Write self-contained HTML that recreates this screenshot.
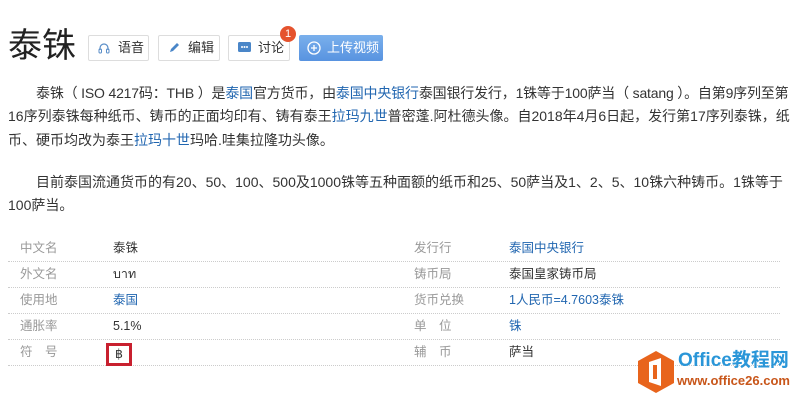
<!DOCTYPE html>
<html><head><meta charset="utf-8"><style>
body{margin:0;background:#fff;width:800px;height:400px;overflow:hidden;font-family:"Liberation Sans","Noto Sans CJK SC",sans-serif;color:#333}
.t{position:absolute;left:8px;top:24px;font-size:34px;color:#222;line-height:44px}
.btn{position:absolute;top:35px;height:26px;border:1px solid #ddd;border-radius:2px;font-size:13px;line-height:24px;color:#333;box-sizing:border-box;background:#fff}
.p{position:absolute;left:8px;font-size:14px;line-height:23.5px;white-space:nowrap}
a{color:#2166b0;text-decoration:none}
.r{position:absolute;left:8px;width:772px;height:26px;border-bottom:1px dotted #ccc;font-size:12.5px;line-height:26px}
.r span{position:absolute}
.l{color:#999}
</style></head><body>
<div class="t">泰铢</div>
<div class="btn" style="left:88px;width:61px"><svg style="position:absolute;left:9px;top:6px" width="12" height="12" viewBox="0 0 12 12"><path d="M2 8V6a4 4 0 0 1 8 0v2" fill="none" stroke="#5a8ec8" stroke-width="1.2"/><rect x="1" y="7" width="2.5" height="4" rx="1" fill="none" stroke="#5a8ec8"/><rect x="8.5" y="7" width="2.5" height="4" rx="1" fill="none" stroke="#5a8ec8"/></svg><span style="position:absolute;left:29px">语音</span></div>
<div class="btn" style="left:158px;width:62px"><svg style="position:absolute;left:9px;top:5px" width="13" height="13" viewBox="0 0 13 13"><path d="M2 11l1-3 6-6 2 2-6 6z" fill="#4a86c8"/></svg><span style="position:absolute;left:29px">编辑</span></div>
<div class="btn" style="left:228px;width:62px"><svg style="position:absolute;left:9px;top:6px" width="13" height="12" viewBox="0 0 13 12"><rect x="0" y="0" width="13" height="10" rx="1.5" fill="#4a86c8"/><circle cx="4" cy="5" r="1" fill="#fff"/><circle cx="6.5" cy="5" r="1" fill="#fff"/><circle cx="9" cy="5" r="1" fill="#fff"/></svg><span style="position:absolute;left:29px">讨论</span></div>
<div style="position:absolute;left:280px;top:26px;width:16px;height:16px;border-radius:50%;background:#e5532e;color:#fff;font-size:11px;line-height:16px;text-align:center">1</div>
<div class="btn" style="left:299px;width:84px;border:none;background:linear-gradient(#7ab0ec,#5893e0);color:#fff;line-height:26px"><svg style="position:absolute;left:8px;top:6px" width="14" height="14" viewBox="0 0 14 14"><circle cx="7" cy="7" r="6" fill="none" stroke="#fff" stroke-width="1.3"/><path d="M7 4v6M4 7h6" stroke="#fff" stroke-width="1.3"/></svg><span style="position:absolute;left:28px">上传视频</span></div>
<div class="p" style="top:82px;left:36px;letter-spacing:-0.18px">泰铢（ ISO 4217码：THB ）是<a>泰国</a>官方货币，由<a>泰国中央银行</a>泰国银行发行，1铢等于100萨当（ satang ）。自第9序列至第</div>
<div class="p" style="top:105px">16序列泰铢每种纸币、铸币的正面均印有、铸有泰王<a>拉玛九世</a>普密蓬.阿杜德头像。自2018年4月6日起，发行第17序列泰铢，纸</div>
<div class="p" style="top:129px">币、硬币均改为泰王<a>拉玛十世</a>玛哈.哇集拉隆功头像。</div>
<div class="p" style="top:171px;left:36px">目前泰国流通货币的有20、50、100、500及1000铢等五种面额的纸币和25、50萨当及1、2、5、10铢六种铸币。1铢等于</div>
<div class="p" style="top:194px">100萨当。</div>
<div class="r" style="top:235px"><span class="l" style="left:12px">中文名</span><span style="left:105px">泰铢</span><span class="l" style="left:406px">发行行</span><span style="left:501px"><a>泰国中央银行</a></span></div>
<div class="r" style="top:261px"><span class="l" style="left:12px">外文名</span><span style="left:105px">บาท</span><span class="l" style="left:406px">铸币局</span><span style="left:501px">泰国皇家铸币局</span></div>
<div class="r" style="top:287px"><span class="l" style="left:12px">使用地</span><span style="left:105px"><a>泰国</a></span><span class="l" style="left:406px">货币兑换</span><span style="left:501px"><a>1人民币=4.7603泰铢</a></span></div>
<div class="r" style="top:313px"><span class="l" style="left:12px">通胀率</span><span style="left:105px">5.1%</span><span class="l" style="left:406px">单　位</span><span style="left:501px"><a>铢</a></span></div>
<div class="r" style="top:339px"><span class="l" style="left:12px">符　号</span><span style="left:98px;top:4px;width:20px;height:17px;border:3px solid #c8202f;line-height:17px;text-align:center;box-sizing:content-box">฿</span><span class="l" style="left:406px">辅　币</span><span style="left:501px">萨当</span></div>
<svg style="position:absolute;left:636px;top:350px" width="40" height="44" viewBox="0 0 40 44"><path d="M20 1l18 10v22L20 43 2 33V11z" fill="#e8641c"/><path d="M13 12l12-4v28l-12-4z" fill="#fff"/><rect x="17" y="15" width="4" height="14" fill="#e8641c"/></svg>
<div style="position:absolute;left:678px;top:350px;font-size:19px;font-weight:bold;color:#2a96d8;line-height:22px;white-space:nowrap">Office教程网</div>
<div style="position:absolute;left:677px;top:373px;font-size:13px;font-weight:bold;color:#c8561a;line-height:16px;white-space:nowrap">www.office26.com</div>
</body></html>
